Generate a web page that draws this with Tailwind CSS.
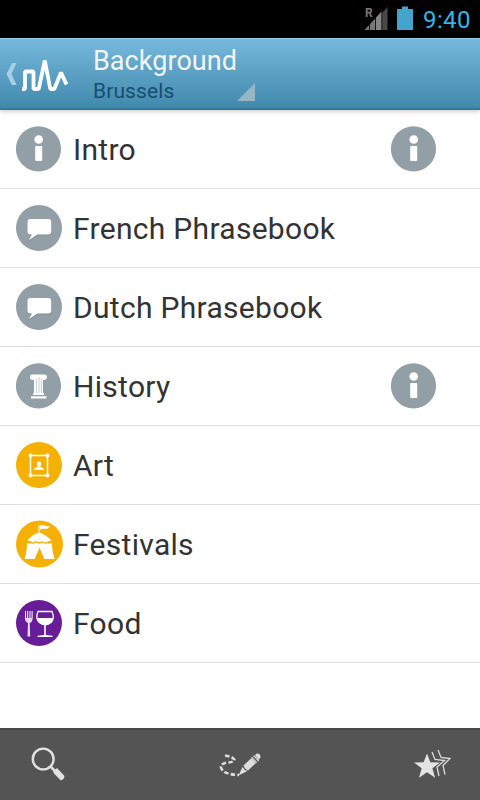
<!DOCTYPE html>
<html lang="en"><head><meta charset="utf-8"><title>Background</title>
<script src="https://cdn.jsdelivr.net/npm/@tailwindcss/browser@4"></script></head>
<body class="w-[480px] h-[800px] overflow-hidden bg-white flex flex-col font-['Roboto',sans-serif]">
<svg class="hidden">
<symbol id="info" viewBox="0 0 48 48"><circle cx="22.5" cy="23.8" r="22.6" fill="#939fa6"/><circle cx="22.7" cy="14.5" r="4.300" fill="#fff"/><rect x="19.200" y="21" width="7" height="15" rx="1" fill="#fff"/></symbol>
<symbol id="speech" viewBox="0 0 48 48"><circle cx="23" cy="24" r="23" fill="#939fa6"/><path d="M14 15.500h18.500q3.500 0 3.500 3.500v9q0 3.500-3.500 3.500H22l-9.500 6 3-6q-4-.3-4-3.500v-9q0-3.500 2.500-3.500z" fill="#818e96"/><path d="M14.300 15h18q3 0 3 3v9.500q0 3-3 3H21.500l-8.500 5.500 3-5.500h-1.500q-3 0-3-3v-9.500q0-3 2.800-3z" fill="#fff"/></symbol>
</svg>
<div class="h-[38px] shrink-0 bg-black flex justify-end">
<svg class="w-[60px] h-[38px]" viewBox="360 0 60 38"><path d="M364.500 30 376 17.500V30z" fill="#777"/><path d="M376 17.500 382 11V30h-6z" fill="#858585"/><path d="M382 13 387.500 7V30H382z" fill="#484848"/><path d="M369.500 22v8M375.500 16v14M381.800 10v20" stroke="#000" stroke-width=".8"/><text x="365" y="17" font-family="Roboto" font-size="12" font-weight="700" fill="#777">R</text><path d="M397 9h5V6.500h6V9h5v21h-16z" fill="#43a5cc"/></svg>
<div class="w-[60px] pl-[3px] pt-[6px] text-[24px] leading-[28px] text-[#33b5e5] whitespace-nowrap"><span class="tracking-[0.400px]">9:40</span></div>
</div>
<header class="relative z-10 h-[72px] shrink-0 flex bg-linear-to-b from-[#76b9dc] to-[#4089ad] border-t border-t-[#91c9e5] border-b-2 border-b-[#357998] shadow-[0_1px_5px_rgba(0,0,0,0.25)]">
<svg class="w-[93px] h-[70px] shrink-0" viewBox="0 39 93 70"><path d="M12 63h4.500l-5 11 5 11H12L6.500 74z" fill="#a8cfe2"/><path d="M22 89h3V71.500h8.500V89h5.200L44.800 60.500 50.300 89h4L61 72.500l5.500 12" fill="none" stroke="#fff" stroke-width="3.800" stroke-linejoin="bevel"/></svg>
<div class="w-[144px] whitespace-nowrap"><div class="mt-[6px] h-[32px] text-[27px] leading-[32px] text-[#f2f4f5] tracking-[0.050px]">Background</div><div class="h-[26px] pt-px text-[21px] leading-[26px] text-[#164e6d] tracking-[0.100px]">Brussels</div></div>
<svg class="w-[18px] h-[18px] mt-[44px]" viewBox="0 0 18 18"><path d="M0 18 18 0v18z" fill="#96b6c4"/></svg>
</header>
<main class="flex-1 text-[30px] text-[#333]">
<div class="h-[79px] border-b border-[#dfdfdf] pl-4 flex items-center"><svg class="size-12"><use href="#info"/></svg><span class="ml-[9px] pt-px flex-1 tracking-[0.300px]">Intro</span><svg class="size-12 mr-[41px]"><use href="#info"/></svg></div>
<div class="h-[79px] border-b border-[#dfdfdf] pl-4 flex items-center"><svg class="size-12"><use href="#speech"/></svg><span class="ml-[9px] pt-px tracking-[0.300px]">French Phrasebook</span></div>
<div class="h-[79px] border-b border-[#dfdfdf] pl-4 flex items-center"><svg class="size-12"><use href="#speech"/></svg><span class="ml-[9px] pt-px tracking-[0.300px]">Dutch Phrasebook</span></div>
<div class="h-[79px] border-b border-[#dfdfdf] pl-4 flex items-center"><svg class="size-12" viewBox="0 0 48 48"><circle cx="22.500" cy="23.800" r="22.600" fill="#939fa6"/><path d="M16 12.500h13q2 0 2 2.500t-2.500 3H27V31h1v2H17v-2h1V18h-1.500Q14 18 14 15t2-2.500zM15 34.200h15.500v2.300H15z" fill="#fff"/><path d="M20.400 17v14M23 15v16M25.300 17v14" stroke="#b0babf" stroke-width=".7"/></svg><span class="ml-[9px] pt-px flex-1 tracking-[0.300px]">History</span><svg class="size-12 mr-[41px]"><use href="#info"/></svg></div>
<div class="h-[79px] border-b border-[#dfdfdf] pl-4 flex items-center"><svg class="size-12" viewBox="0 0 48 48"><circle cx="23" cy="24" r="23" fill="#f4b103"/><rect x="14.500" y="14.500" width="17" height="20" fill="none" stroke="#fff" stroke-width="1.500"/><g fill="#fff"><circle cx="14.500" cy="14.500" r="2"/><circle cx="31.500" cy="14.500" r="2"/><circle cx="14.500" cy="34.500" r="2"/><circle cx="31.500" cy="34.500" r="2"/><path d="M21 21.500q2-2 4 0v2.500l-1 1.800 3.500 1.200v2h-9v-2l3.500-1.200-1-1.800z"/></g></svg><span class="ml-[9px] pt-px tracking-[0.300px]">Art</span></div>
<div class="h-[79px] border-b border-[#dfdfdf] pl-4 flex items-center"><svg class="size-12" viewBox="0 0 48 48"><circle cx="23.500" cy="24" r="23.500" fill="#f4b103"/><g fill="#fff"><path d="M22.500 5h1v7.500q6 2 12 8l-4 1q-3 2-5-.5-3.500 2-7 0-3 2.500-4 .5L11.500 20.500q4-5.500 11-8z"/><path d="M24 5.500q3-1 5 .3 2 1 5 .2-1.500 3-4.500 3-3-.5-5.500.8zM11 22.500q2 1.500 4.300.8 2 1.200 4.500-.8 3.500 2 7 0 2 2 5 .8 2.500.8 4-.5Q36.500 33 38.500 39H28.300L23.500 27.500 18.500 39H8.500Q11 32 11 22.500z"/></g></svg><span class="ml-[9px] pt-px tracking-[0.300px]">Festivals</span></div>
<div class="h-[79px] border-b border-[#dfdfdf] pl-4 flex items-center"><svg class="size-12" viewBox="0 0 48 48"><circle cx="23" cy="24" r="23" fill="#671c98"/><path d="M9.500 12v8q0 3 3.300 4 3.300-1 3.300-4v-8M11.700 12v9M14 12v9" fill="none" stroke="#fff" stroke-width="1"/><path d="M10 19h6l-.5 3.500-2.700 1.500-2.500-1.500zM12 23h1.700l.5 14.500h-2.700z" fill="#e6dbec"/><path d="M22 12.500h14q3 7-1 11-5.500 4.500-11.500 0-4.500-4-1.500-11z" fill="none" stroke="#fff" stroke-width="1.300"/><path d="M21 19h16q-.5 6.500-8 7-7.500-.5-8-7zM28.200 25.500h1.600V36l6.700.7v1.200h-15v-1.200l6.700-.7z" fill="#fff"/></svg><span class="ml-[9px] pt-px tracking-[0.300px]">Food</span></div>
</main>
<footer class="h-[72px] shrink-0 bg-[#545454] border-t-2 border-[#484848] flex justify-between">
<svg class="w-[96px] h-[70px]" viewBox="0 730 96 70"><circle cx="43.200" cy="759" r="10.400" fill="none" stroke="#e1e1e1" stroke-width="2.400"/><path d="m50 766 5 5" stroke="#e1e1e1" stroke-width="2.500"/><path d="m53.200 771.300 3.800-3.300 7.300 7.800q.8 3.200-3.400 4.600l-6.900-6.800z" fill="#e1e1e1"/></svg>
<svg class="w-[70px] h-[70px]" viewBox="205 730 70 70"><path d="M225 755.500q9 1.500 9.500 4.500 0 2-7 2.500-7.500 1.500-6.500 5 2 7 18 7.500" fill="none" stroke="#dcdcdc" stroke-width="2.600" stroke-dasharray="4.500 2.200"/><path d="m238.500 775.500 4-8.500q2 3.500 5 4z" fill="#ddd"/><path d="m243.500 765.500 8-7.500 4.500 5-8 7.500q-3-1-4.500-5zM255 755l2-1.500q3.500-.5 3.500 4l-2 2.500z" fill="#ddd"/><path d="m251.700 757.200 5 5.500M253.600 755.500l5 5.500" stroke="#ddd" stroke-width="1.200"/></svg>
<svg class="w-[96px] h-[70px]" viewBox="384 730 96 70"><path d="m427 753.500 3.300 8.800 9.700.2-7.600 5.700 2.700 9.500-8.100-5.500-8 5.500 2.700-9.500-7.700-5.700 9.600-.2z" fill="#e3e3e3"/><g fill="none" stroke="#dcdcdc" stroke-width="1.300"><path d="m432 752 3 7.500 9.500 1-7.500 6.500 2 9"/><path d="m438 750 3 7.500 9 1L443 765.500l2 9"/></g></svg>
</footer>
</body></html>
